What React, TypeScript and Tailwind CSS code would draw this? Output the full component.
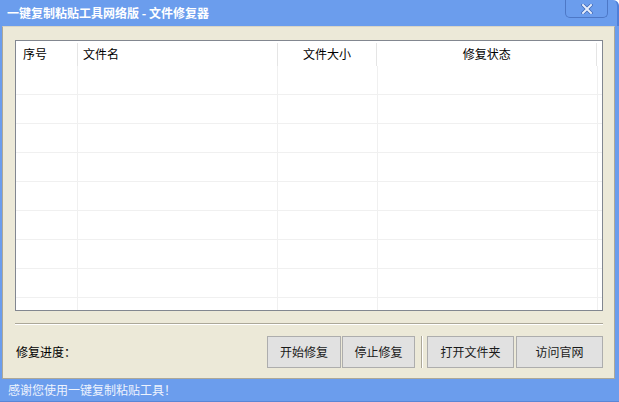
import React from 'react';

const cjk = { fontFamily: '"Noto Sans CJK SC", "Noto Sans", sans-serif' };

const columns = [
    { label: '序号', width: 'w-[62px]', align: 'justify-start pl-[7px]' },
    { label: '文件名', width: 'w-[200px]', align: 'justify-start pl-[5px]' },
    { label: '文件大小', width: 'w-[100px]', align: 'justify-center' },
    { label: '修复状态', width: 'w-[220px]', align: 'justify-center' },
];

const rows = [0, 1, 2, 3, 4, 5, 6, 7];

const ToolButton: React.FC<{ label: string; width: string }> = ({ label, width }) => (
    <button className={`${width} h-[32px] border border-[#adadad] bg-[#e1e1e1] text-[12px] text-[#1a1a1a] flex items-center justify-center`}>
        {label}
    </button>
);

export default function App() {
    return (
        <div className="w-[619px] h-[402px] bg-[#6b9ded] flex flex-col overflow-hidden rounded-tr-[6px]" style={cjk}>
            {/* title bar */}
            <div className="relative h-[26px] flex items-center pl-[7px] text-white font-bold text-[12px] border-r-[2px] border-[#4f7fd9] rounded-tr-[6px]">
                一键复制粘贴工具网络版 - 文件修复器
                <div className="absolute right-[9px] top-0 w-[43px] h-[18px] border-x border-b border-[#4d78c6] rounded-b-[5px] flex items-center justify-center">
                    <svg width="12" height="10" viewBox="0 0 12 10">
                        <path d="M2 1 L10 9 M10 1 L2 9" stroke="#3f67b5" strokeWidth="3.4" strokeLinecap="square" />
                        <path d="M2 1 L10 9 M10 1 L2 9" stroke="#e6eefc" strokeWidth="2" strokeLinecap="square" />
                    </svg>
                </div>
            </div>

            {/* client area */}
            <div className="ml-[2px] mr-[4px] h-[353px] bg-[#ece9d8] border border-[#aca899] border-t-[#d8d5c8] pt-[13px] pl-[12px] pr-[11px] flex flex-col">
                {/* list view */}
                <div className="w-[588px] h-[271px] border border-[#828790] bg-white overflow-hidden flex flex-col">
                    <div className="h-[25px] flex shrink-0">
                        {columns.map(col => (
                            <div key={col.label} className={`${col.width} h-full flex items-center text-[12px] text-black`}>
                                <span className={`flex-1 flex ${col.align}`}>{col.label}</span>
                                <span className="w-[1px] h-[23px] bg-[#e5e5e5] self-end" />
                            </div>
                        ))}
                        <div className="w-[5px]" />
                    </div>
                    {rows.map(r => (
                        <div key={r} className="h-[29px] flex shrink-0 border-b border-[#f0f0f0]">
                            {columns.map(col => (
                                <div key={col.label} className={`${col.width} h-full border-r border-[#f0f0f0]`} />
                            ))}
                        </div>
                    ))}
                    <div className="flex-1 flex">
                        {columns.map(col => (
                            <div key={col.label} className={`${col.width} h-full border-r border-[#f0f0f0]`} />
                        ))}
                    </div>
                </div>

                {/* etched separator */}
                <div className="mt-[12px] w-[588px] h-[2px] border-t border-[#aca899] border-b border-b-white" />

                {/* bottom controls */}
                <div className="mt-[11px] flex items-center">
                    <span className="flex-1 pl-[1px] text-[12px] text-black">修复进度：</span>
                    <ToolButton label="开始修复" width="w-[74px]" />
                    <div className="w-[1px]" />
                    <ToolButton label="停止修复" width="w-[73px]" />
                    <div className="ml-[6px] mr-[4px] w-[2px] h-[32px] border-l border-[#aca899] border-r border-r-white" />
                    <ToolButton label="打开文件夹" width="w-[87px]" />
                    <div className="w-[2px]" />
                    <ToolButton label="访问官网" width="w-[87px]" />
                </div>
            </div>

            {/* status bar */}
            <div className="flex-1 flex items-center pl-[8px] text-[12px] text-[#eef3fd] border-b border-[#5a86d6]">
                感谢您使用一键复制粘贴工具！
            </div>
        </div>
    );
}
